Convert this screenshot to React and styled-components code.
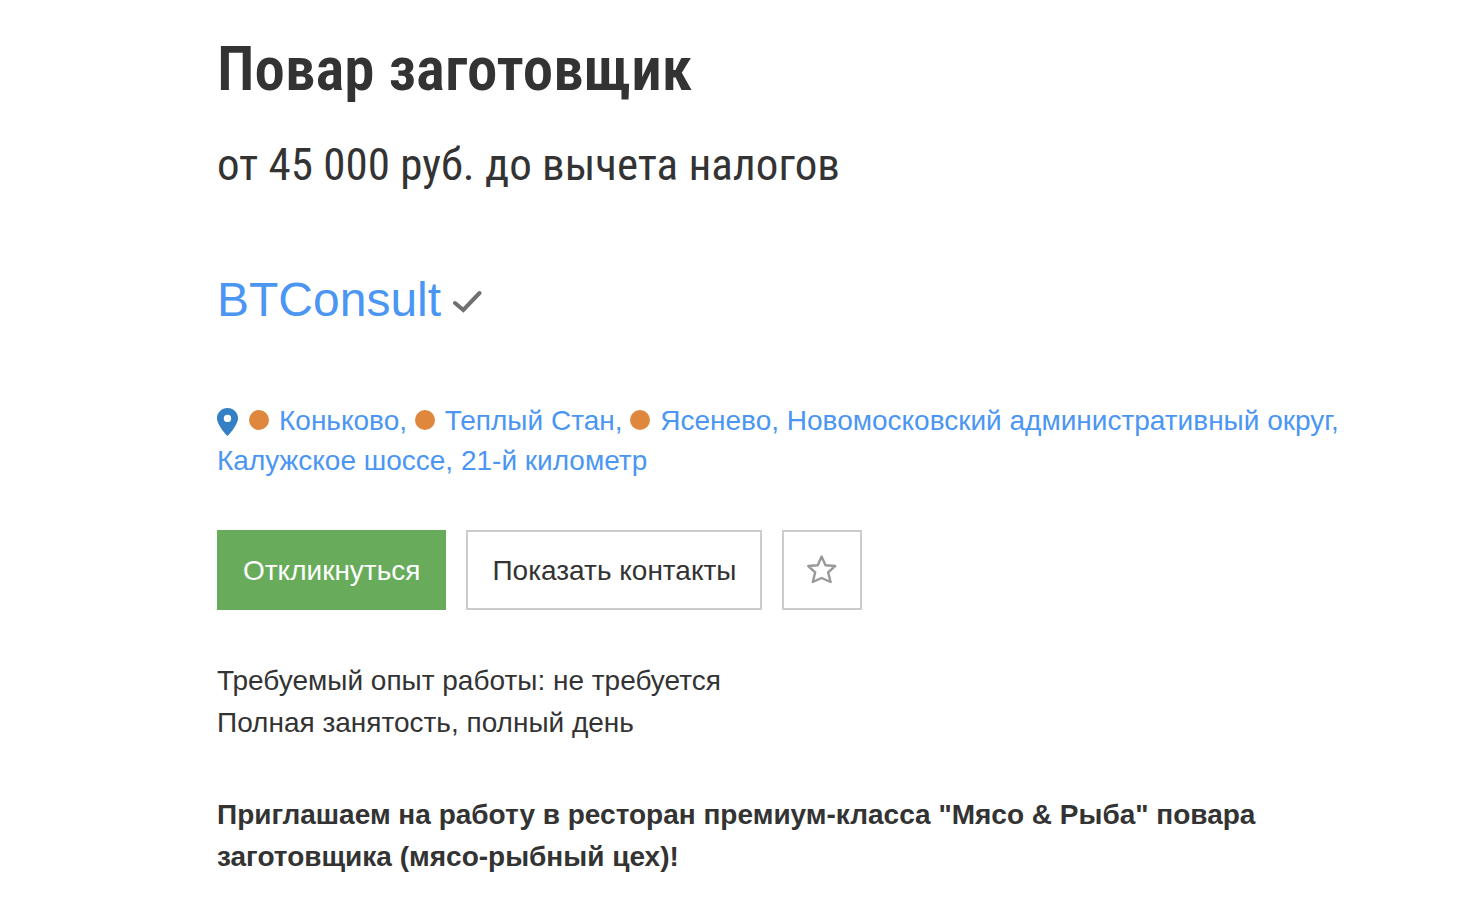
import React from 'react';
import styled, { createGlobalStyle } from 'styled-components';

const Global = createGlobalStyle`
  * { box-sizing: border-box; }
  body { margin: 0; background: #fff; color: #333; font-family: "Liberation Sans", Arial, sans-serif; font-size: 28px; line-height: 42px; }
`;
const Page = styled.main`padding: 31px 112px 24px 217px;`;
const Title = styled.h1`margin: 0; font-family: "Roboto Condensed", Roboto, sans-serif; font-size: 61px; line-height: 76px; font-weight: 600;`;
const Salary = styled.p`margin: 28px 0 0; font-family: "Roboto Condensed", Roboto, sans-serif; font-size: 45px; line-height: 60px;`;
const Company = styled.div`display: flex; align-items: center; gap: 12px; margin-top: 75px; font-size: 48px; line-height: 60px;`;
const Link = styled.a`color: #4b96f3; text-decoration: none;`;
const Verified = styled.svg`width: 30px; height: 26px; fill: none; stroke: #707070; stroke-width: 4px; stroke-linecap: round;`;
const Address = styled.p`margin: 71px 0 0; line-height: 40px;`;
const Pin = styled.svg`width: 22px; height: 28px; margin-right: 10px; vertical-align: -6px; fill: #3580c4;`;
const Metro = styled.span`display: inline-block; width: 20px; height: 20px; margin-right: 10px; border-radius: 50%; background: #e0873e;`;
const Actions = styled.div`display: flex; flex-wrap: wrap; gap: 20px; margin-top: 49px;`;
const Button = styled.button`
  height: 80px;
  min-width: 80px;
  padding: ${(p) => (p.$icon ? '0' : '2px 24px 0')};
  display: flex; align-items: center; justify-content: center;
  font: inherit; cursor: pointer;
  color: ${(p) => (p.$primary ? '#fff' : '#333')};
  background: ${(p) => (p.$primary ? '#68ac5b' : '#fff')};
  border: 2px solid ${(p) => (p.$primary ? '#68ac5b' : '#ccc')};
`;
const Star = styled.svg`width: 32px; height: 32px; fill: none; stroke: #999; stroke-width: 2.4px; stroke-linejoin: round;`;
const Details = styled.p`margin: 50px 0 0;`;
const Intro = styled.p`margin: 50px 0 0; font-weight: 700;`;

const stations = ['Коньково,', 'Теплый Стан,', 'Ясенево,'];

export default function App() {
  return (
    <Page>
      <Global />
      <Title>Повар заготовщик</Title>
      <Salary>от 45 000 руб. до вычета налогов</Salary>
      <Company>
        <Link href="#company">BTConsult</Link>
        <Verified viewBox="0 0 30 26" role="img" aria-label="Проверено"><path d="M2 16L10.300 23L26.500 6" /></Verified>
      </Company>
      <Address>
        <Pin viewBox="0 0 22 28" aria-hidden="true">
          <path fillRule="evenodd" d="M10.500 0C4.700 0 0 4.500 0 10.200C0 17.500 10.500 28 10.500 28S21 17.500 21 10.200C21 4.500 16.300 0 10.500 0ZM10.500 6.700a3.700 3.700 0 1 1 0 7.400a3.700 3.700 0 0 1 0-7.400Z" />
        </Pin>
        {stations.map((name) => (
          <React.Fragment key={name}><Metro /><Link href="#metro">{name}</Link>{' '}</React.Fragment>
        ))}
        <Link href="#district">Новомосковский административный округ,</Link>{' '}
        <Link href="#map">Калужское шоссе, 21-й километр</Link>
      </Address>
      <Actions>
        <Button type="button" $primary>Откликнуться</Button>
        <Button type="button">Показать контакты</Button>
        <Button type="button" $icon aria-label="В избранное">
          <Star viewBox="0 0 32 32" aria-hidden="true">
            <path d="M15.600 2.500L19.500 11.200L29.200 12L22.100 18.300L24.600 28L15.600 24L6.800 28L9.200 18.300L2.200 12L11.800 11.200Z" />
          </Star>
        </Button>
      </Actions>
      <Details>Требуемый опыт работы: не требуется<br />Полная занятость, полный день</Details>
      <Intro>Приглашаем на работу в ресторан премиум-класса "Мясо &amp; Рыба" повара заготовщика (мясо-рыбный цех)!</Intro>
    </Page>
  );
}
